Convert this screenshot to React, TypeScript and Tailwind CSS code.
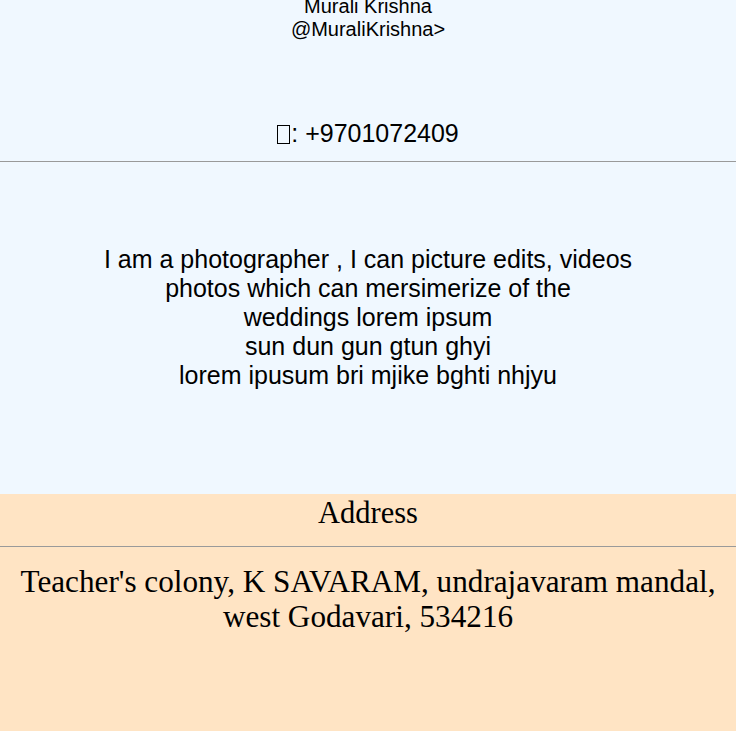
import React from 'react'

export default function App() {
  return (
    <div className="min-h-screen bg-[#ffe4c4] text-black">
      <section className="bg-[#f0f8ff] h-[494px] overflow-hidden font-['Liberation_Sans',Arial,sans-serif] text-center">
        <div className="-mt-[5px] text-[20px] leading-[23px]">
          <div>Murali Krishna</div>
          <div>@MuraliKrishna&gt;</div>
        </div>
        <div className="mt-[78px] text-[25px] leading-[29px]">
          <span className="inline-block w-[13px] h-[19px] border border-black align-[-2px] mr-[1px]" />: +9701072409
        </div>
        <hr className="mt-[13px] border-t border-[#9a9a9a]" />
        <p className="mt-[83px] text-[25px] leading-[29px]">
          I am a photographer , I can picture edits, videos
          <br />
          photos which can mersimerize of the
          <br />
          weddings lorem ipsum
          <br />
          sun dun gun gtun ghyi
          <br />
          lorem ipusum bri mjike bghti nhjyu
        </p>
      </section>
      <section className="font-['Liberation_Serif','Times_New_Roman',serif] text-center">
        <h2 className="pt-[2px] text-[30.5px] leading-[35px]">Address</h2>
        <hr className="mt-[15px] border-t border-[#9a9a9a]" />
        <p className="mt-[17px] text-[31.2px] leading-[35px]">
          Teacher's colony, K SAVARAM, undrajavaram mandal,
          <br />
          west Godavari, 534216
        </p>
      </section>
    </div>
  )
}
